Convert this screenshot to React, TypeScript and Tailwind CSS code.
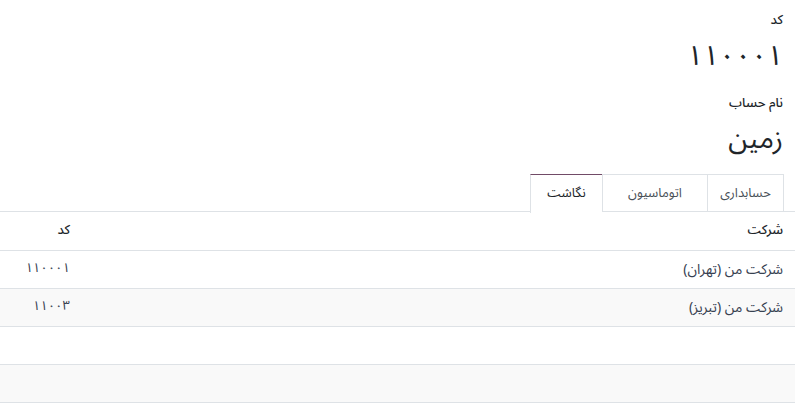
import React from "react";

const rows = [
  { name: "شرکت من (تهران)", code: "۱۱۰۰۰۱", striped: false },
  { name: "شرکت من (تبریز)", code: "۱۱۰۰۳", striped: true },
  { name: "", code: "", striped: false },
  { name: "", code: "", striped: true },
];

export default function App() {
  return (
    <div
      dir="rtl"
      className="w-[795px] h-[403px] overflow-hidden bg-white text-[#212529]"
      style={{ fontFamily: '"Noto Sans Arabic", "Noto Sans", "DejaVu Sans", sans-serif' }}
    >
      <div className="pr-[12px] pt-[10px] flex flex-col">
        <div className="text-[13px] font-medium h-[20px] leading-[20px]">کد</div>
        <div className="text-[28px] leading-[50px] h-[50px] mt-[2px]">۱۱۰۰۰۱</div>
        <div className="mt-[11px] text-[13px] font-medium h-[20px] leading-[20px]">نام حساب</div>
        <div className="text-[28px] leading-[50px] h-[50px] mt-[2px] mb-[9px]">زمین</div>
      </div>
      <div className="flex border-b border-[#dee2e6] pr-[11px] h-[38px]">
        <div className="w-[77px] h-[38px] flex items-center justify-center border border-b-0 border-[#dee2e6] text-[13px] text-[#495057]">حسابداری</div>
        <div className="w-[105px] h-[38px] flex items-center justify-center border border-b-0 border-r-0 border-[#dee2e6] text-[13px] text-[#495057]">اتوماسیون</div>
        <div className="w-[72px] h-[39px] flex items-center justify-center border border-b-0 border-r-0 border-[#dee2e6] border-t-[#714b67] bg-white mb-[-1px] text-[13px] text-[#212529]">نگاشت</div>
      </div>
      <table className="w-full border-collapse text-[14px]">
        <thead>
          <tr className="h-[38px] border-b border-[#dee2e6]">
            <th className="text-right font-medium pr-[12px] text-[13px]">شرکت</th>
            <th className="text-right font-medium w-[78px] pr-[8px] text-[13px]">کد</th>
          </tr>
        </thead>
        <tbody>
          {rows.map((r, i) => (
            <tr
              key={i}
              className={`h-[38px] border-b border-[#dee2e6] ${r.striped ? "bg-[#f9f9f9]" : "bg-white"}`}
            >
              <td className="text-right pr-[12px] text-[#374151]">{r.name}</td>
              <td className="text-right pr-[8px] text-[#374151] text-[13px]">{r.code}</td>
            </tr>
          ))}
        </tbody>
      </table>
    </div>
  );
}
